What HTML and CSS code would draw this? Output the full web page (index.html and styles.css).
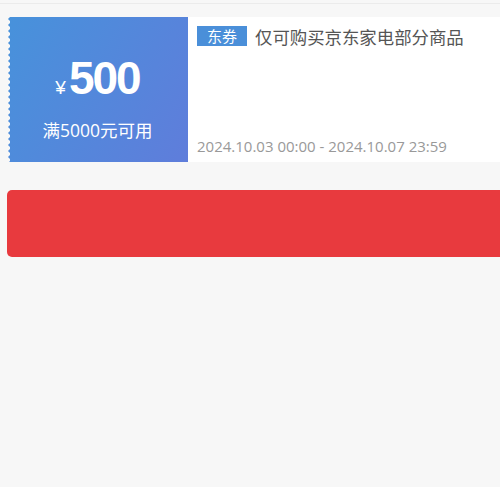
FILE: index.html
```html
<!DOCTYPE html>
<html lang="zh-CN">
<head>
    <meta charset="UTF-8">
    <meta name="viewport" content="width=device-width, initial-scale=1.0">
    <title>优惠券</title>
    <link rel="stylesheet" href="styles.css">
</head>
<body>

    <div class="topline"></div>

    <div class="coupon">
        <div class="coupon-left">
            <div class="amount"><span class="yen">¥</span>500</div>
            <div class="limit">满5000元可用</div>
        </div>
        <div class="coupon-right">
            <div class="title"><span class="tag">东券</span>仅可购买京东家电部分商品</div>
            <div class="date">2024.10.03 00:00 - 2024.10.07 23:59</div>
        </div>
    </div>

    <div class="btn"></div>

</body>
</html>
```

FILE: styles.css
```css
body {
    margin: 0;
    background-color: #f7f7f7;
    font-family: "Open Sans", "Noto Sans CJK SC", sans-serif;
    overflow: hidden;
}
.topline {
    height: 3px;
    border-bottom: 1px solid #ebebeb;
}
.coupon {
    display: flex;
    margin: 13px 0 0 7px;
    height: 145px;
    background-color: #fff;
}
.coupon-left {
    position: relative;
    width: 181px;
    flex-shrink: 0;
    display: flex;
    flex-direction: column;
    align-items: center;
    justify-content: center;
    color: #fff;
    background: linear-gradient(120deg, #4792db, #5f7ddb);
}
.coupon-left::before {
    content: "";
    position: absolute;
    left: 0;
    top: 0;
    bottom: 0;
    width: 4px;
    background: radial-gradient(circle at 0 50%, #f7f7f7 2.6px, transparent 3.2px) 0 2px / 4px 6px repeat-y;
}
.amount {
    font-family: "Liberation Sans", Arial, sans-serif;
    font-weight: bold;
    font-size: 46px;
    letter-spacing: -2px;
    line-height: 50px;
    margin-top: 16px;
}
.yen {
    font-size: 19px;
    font-weight: normal;
    letter-spacing: 0;
    margin-right: 3px;
}
.limit {
    font-size: 17.5px;
    margin-top: 4px;
}
.coupon-right {
    flex: 1;
    display: flex;
    flex-direction: column;
    justify-content: space-between;
    padding: 8px 0 6px 9px;
}
.title {
    font-size: 17.4px;
    color: #555;
    line-height: 24px;
}
.tag {
    display: inline-block;
    background-color: #4a8fd9;
    color: #fff;
    font-size: 15px;
    line-height: 20px;
    padding: 0 10px;
    margin-right: 8px;
    vertical-align: 2px;
}
.date {
    font-size: 15px;
    color: #999;
    line-height: 20px;
}
.btn {
    margin: 28px 0 0 7px;
    height: 67px;
    border-radius: 5px 0 0 5px;
    background-color: #e83a3e;
}
```
